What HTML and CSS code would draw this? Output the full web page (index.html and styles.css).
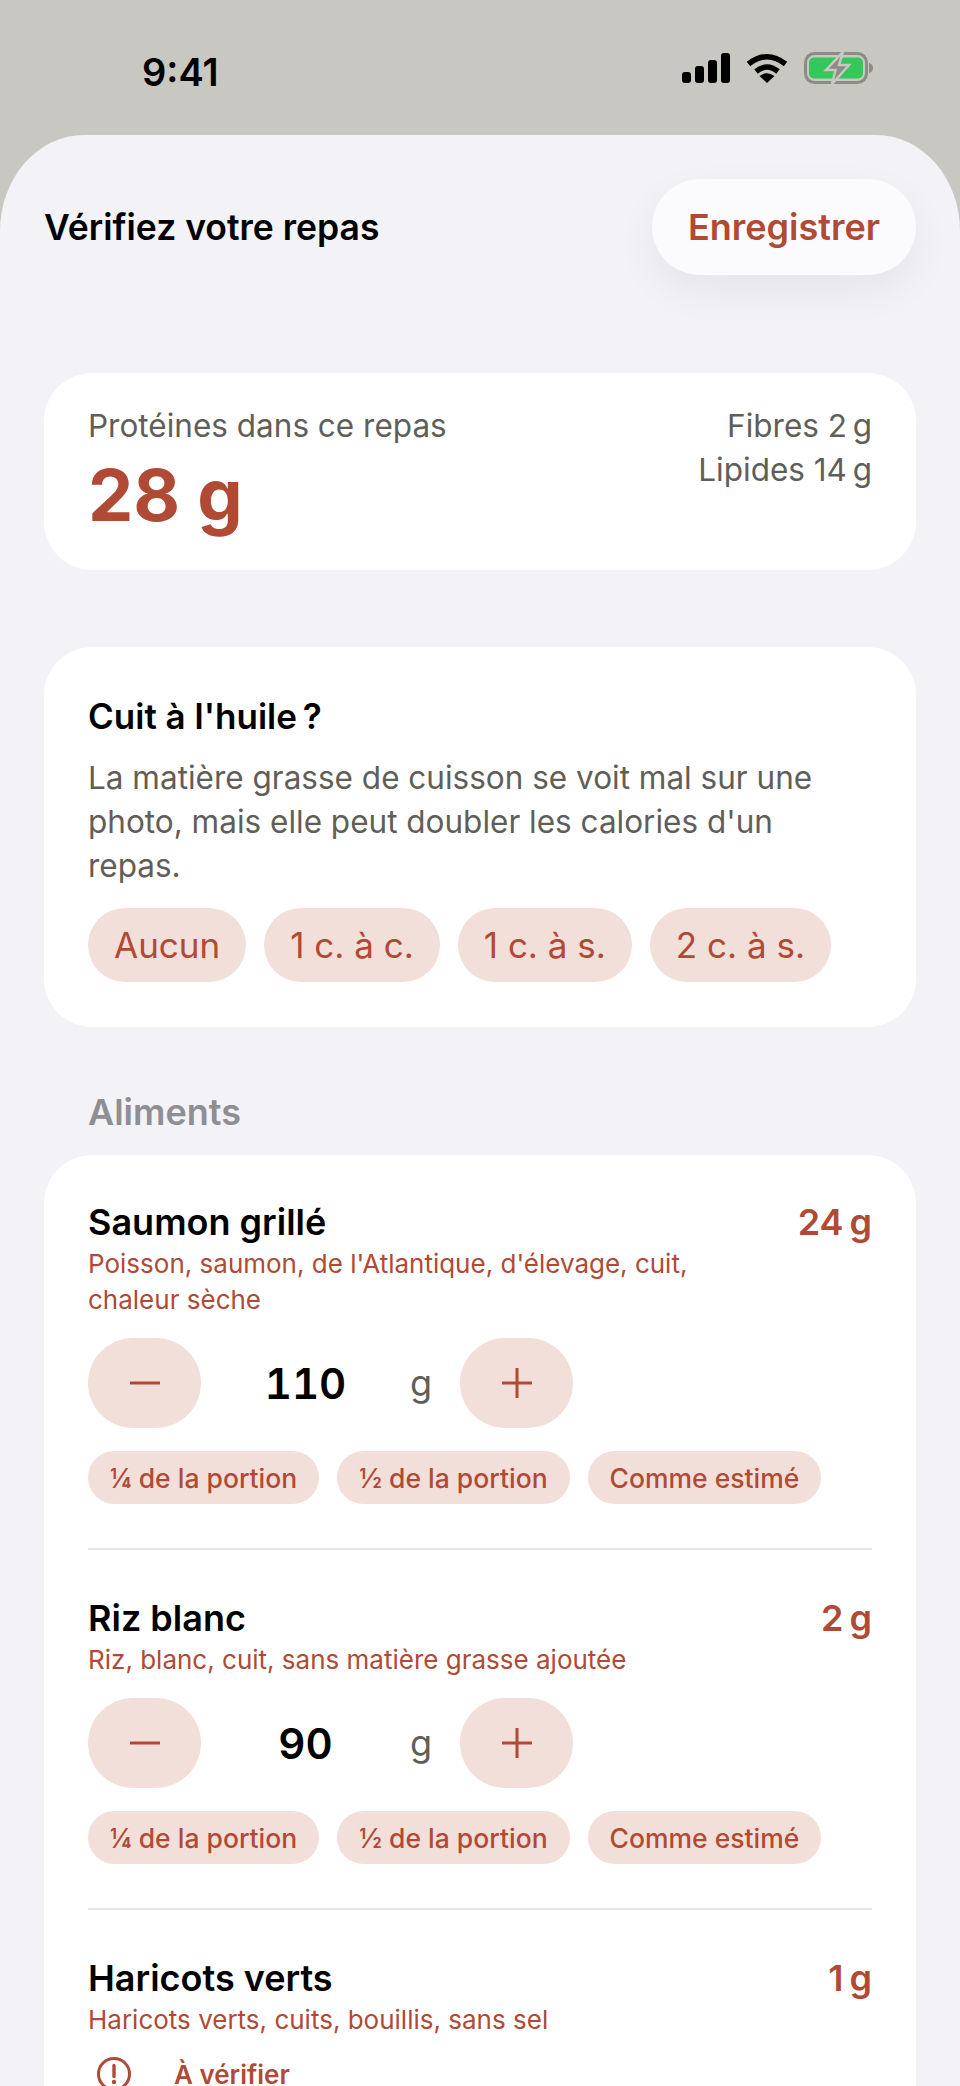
FILE: index.html
```html
<!DOCTYPE html>
<html lang="fr">
<head>
  <meta charset="UTF-8">
  <meta name="viewport" content="width=device-width, initial-scale=1">
  <title>Vérifiez votre repas</title>
  <link rel="stylesheet" href="styles.css">
</head>
<body>
  <div class="status-bar">
    <span class="time">9:41</span>
    <div class="status-icons">
      <svg width="48" height="30" viewBox="0 0 48 30"><rect x="0" y="19" width="9" height="11" rx="3"/><rect x="13" y="13" width="9" height="17" rx="3"/><rect x="26" y="7" width="9" height="23" rx="3"/><rect x="39" y="0" width="9" height="30" rx="3"/></svg>
      <svg width="42" height="30" viewBox="0 0 42 30"><path d="M2.500 11 Q21 -3.500 39.500 11" fill="none" stroke="#000" stroke-width="5.500"/><path d="M10 18.500 Q21 9.500 32 18.500" fill="none" stroke="#000" stroke-width="5.500"/><path d="M21 30 L13.500 23 Q21 17.500 28.500 23 Z"/></svg>
      <svg width="69" height="32" viewBox="0 0 69 32"><rect x="1.500" y="1.500" width="61" height="29" rx="9" fill="none" stroke="#8c8b87" stroke-width="3"/><rect x="5" y="5.500" width="54" height="21" rx="5" fill="#34c759"/><path d="M65 11 q4 1 4 5 t-4 5 Z" fill="#8c8b87"/><path d="M39 0 L22 18 H31.500 L28 32 L45 13 H35 Z" fill="#8c8b87" stroke="#c9c7c1" stroke-width="2.500"/></svg>
    </div>
  </div>

  <main class="sheet">
    <header class="sheet-head">
      <h1>Vérifiez votre repas</h1>
      <button class="save">Enregistrer</button>
    </header>

    <section class="card summary">
      <div>
        <div class="muted">Protéines dans ce repas</div>
        <div class="big">28 g</div>
      </div>
      <div class="macros muted">
        <div>Fibres 2&#8239;g</div>
        <div>Lipides 14&#8239;g</div>
      </div>
    </section>

    <section class="card oil">
      <h2>Cuit à l'huile&#8239;?</h2>
      <p class="muted">La matière grasse de cuisson se voit mal sur une photo, mais elle peut doubler les calories d'un repas.</p>
      <div class="oil-options">
        <span class="pill">Aucun</span>
        <span class="pill">1 c. à c.</span>
        <span class="pill">1 c. à s.</span>
        <span class="pill">2 c. à s.</span>
      </div>
    </section>

    <h3 class="section-title">Aliments</h3>

    <section class="card foods">
      <div class="food">
        <div class="food-head">
          <span class="food-name">Saumon grillé</span>
          <span class="food-prot">24&#8239;g</span>
        </div>
        <div class="food-desc">Poisson, saumon, de l'Atlantique, d'élevage, cuit, chaleur sèche</div>
        <div class="stepper">
          <button class="step"><svg width="30" height="30" viewBox="0 0 30 30"><path d="M0 15H30"/></svg></button>
          <span class="qty">110</span>
          <span class="unit">g</span>
          <button class="step"><svg width="30" height="30" viewBox="0 0 30 30"><path d="M0 15H30M15 0V30"/></svg></button>
        </div>
        <div class="chips">
          <span class="chip">¼ de la portion</span>
          <span class="chip">½ de la portion</span>
          <span class="chip">Comme estimé</span>
        </div>
      </div>

      <div class="food">
        <div class="food-head">
          <span class="food-name">Riz blanc</span>
          <span class="food-prot">2&#8239;g</span>
        </div>
        <div class="food-desc">Riz, blanc, cuit, sans matière grasse ajoutée</div>
        <div class="stepper">
          <button class="step"><svg width="30" height="30" viewBox="0 0 30 30"><path d="M0 15H30"/></svg></button>
          <span class="qty">90</span>
          <span class="unit">g</span>
          <button class="step"><svg width="30" height="30" viewBox="0 0 30 30"><path d="M0 15H30M15 0V30"/></svg></button>
        </div>
        <div class="chips">
          <span class="chip">¼ de la portion</span>
          <span class="chip">½ de la portion</span>
          <span class="chip">Comme estimé</span>
        </div>
      </div>

      <div class="food">
        <div class="food-head">
          <span class="food-name">Haricots verts</span>
          <span class="food-prot">1&#8239;g</span>
        </div>
        <div class="food-desc">Haricots verts, cuits, bouillis, sans sel</div>
        <div class="warn">
          <svg width="36" height="36" viewBox="0 0 36 36"><circle cx="18" cy="18" r="15.500" fill="none" stroke="#b04a35" stroke-width="3"/><path d="M18 9.500V20.500" stroke="#b04a35" stroke-width="3.400" stroke-linecap="round"/><circle cx="18" cy="26" r="2.200" fill="#b04a35"/></svg>
          <span>À vérifier</span>
        </div>
      </div>
    </section>
  </main>
</body>
</html>
```

FILE: styles.css
```css
* {
  box-sizing: border-box;
}

html, body {
  height: 2086px;
  overflow: hidden;
}

body {
  margin: 0;
  background: #c9c7c1;
  font-family: Inter, 'Noto Sans', sans-serif;
  color: #000;
}

.status-bar {
  height: 135px;
  padding: 8px 87px 0 142px;
  display: flex;
  justify-content: space-between;
  align-items: center;
}

.time {
  font-size: 38px;
  font-weight: 600;
}

.status-icons {
  display: flex;
  align-items: center;
  gap: 16px;
  margin-top: -8px;
}

.sheet {
  height: 1951px;
  padding: 44px 44px 0;
  background: #f2f2f7;
  border-radius: 84px 84px 0 0 / 96px 96px 0 0;
}

.sheet-head {
  display: flex;
  justify-content: space-between;
  align-items: center;
  margin-bottom: 98px;
}

h1 {
  margin: 0;
  font-size: 35.500px;
  font-weight: 600;
}

.save {
  width: 264px;
  height: 96px;
  border: none;
  border-radius: 48px;
  background: #fbfbfe;
  color: #b04a35;
  font-family: inherit;
  font-size: 36px;
  font-weight: 600;
  box-shadow: 0 16px 40px rgba(0, 0, 0, 0.06);
}

.card {
  background: white;
  border-radius: 48px;
  padding: 44px;
}

.muted {
  color: #5f5e58;
  font-size: 31.500px;
  line-height: 44px;
}

.summary {
  height: 197px;
  padding-top: 31px;
  display: flex;
  justify-content: space-between;
  margin-bottom: 77px;
}

.big {
  margin-top: 9px;
  color: #b04a35;
  font-size: 72px;
  font-weight: 700;
  line-height: 76px;
}

.macros {
  text-align: right;
}

.oil {
  height: 380px;
  padding-top: 47px;
  margin-bottom: 63px;
}

h2 {
  margin: 0 0 18px;
  font-size: 35px;
  font-weight: 600;
  line-height: 44px;
}

.oil p {
  margin: 0 0 20px;
}

.oil-options {
  display: flex;
  gap: 18px;
}

.pill {
  height: 74px;
  padding: 0 26px;
  display: flex;
  align-items: center;
  border-radius: 37px;
  background: #f3dfda;
  color: #b04a35;
  font-size: 35px;
}

.section-title {
  margin: 0 44px 21px;
  color: #8e8e93;
  font-size: 36px;
  font-weight: 600;
  line-height: 44px;
}

.foods {
  padding-bottom: 0;
  height: 1000px;
}

.food {
  padding-bottom: 44px;
  margin-bottom: 45px;
  border-bottom: 2px solid #e5e5ea;
}

.food:last-child {
  border-bottom: none;
}

.food-head {
  display: flex;
  justify-content: space-between;
  font-size: 36px;
  font-weight: 600;
  line-height: 47px;
}

.food-prot {
  color: #b04a35;
}

.food-desc {
  width: 640px;
  color: #b04a35;
  font-size: 26px;
  line-height: 36px;
}

.stepper {
  margin-top: 20px;
  display: flex;
  align-items: center;
}

.step {
  width: 113px;
  height: 90px;
  border: none;
  border-radius: 45px;
  background: #f3dfda;
  display: flex;
  align-items: center;
  justify-content: center;
}

.step svg {
  fill: none;
  stroke: #b04a35;
  stroke-width: 3;
}

.qty {
  width: 209px;
  text-align: center;
  font-size: 42px;
  font-weight: 600;
  font-feature-settings: "tnum";
}

.unit {
  width: 50px;
  color: #5f5e58;
  font-size: 36px;
}

.chips {
  margin-top: 23px;
  display: flex;
  gap: 18px;
}

.chip {
  height: 53px;
  padding: 0 22px;
  display: flex;
  align-items: center;
  border-radius: 27px;
  background: #f3dfda;
  color: #b04a35;
  font-size: 26.500px;
  font-weight: 500;
}

.warn {
  margin-top: 18px;
  display: flex;
  align-items: center;
  gap: 42px;
  padding-left: 8px;
  color: #b04a35;
  font-size: 26px;
  font-weight: 600;
}
```
